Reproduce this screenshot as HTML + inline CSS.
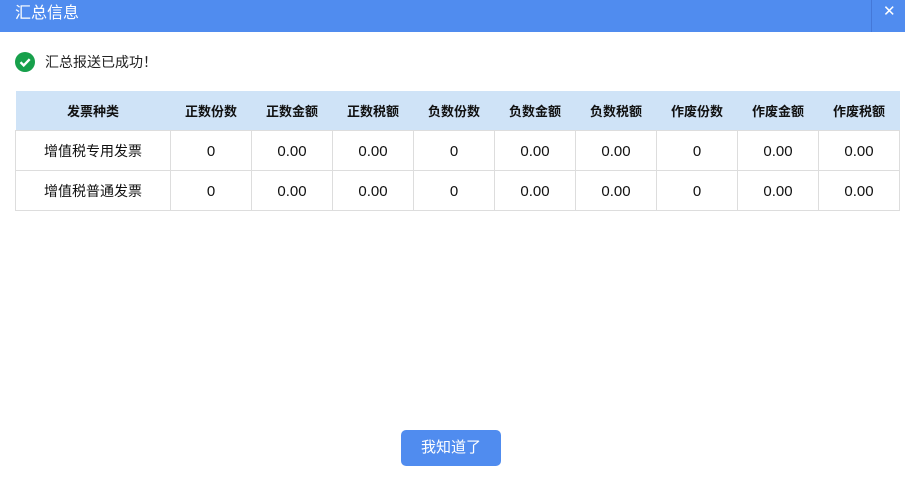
<!DOCTYPE html>
<html><head><meta charset="utf-8"><style>
*{margin:0;padding:0;box-sizing:border-box}
body{width:905px;height:482px;background:#fff;font-family:"Liberation Sans","Noto Sans CJK SC",sans-serif;position:relative;overflow:hidden}
.hd{position:absolute;left:0;top:0;width:905px;height:32px;background:#508cef;color:#fff;font-size:16px;line-height:28px;padding-left:15px}
.sep{position:absolute;left:871px;top:0;width:1px;height:32px;background:#4478d8}
.x{position:absolute;left:883px;top:0;color:#fff;font-size:15px;line-height:24px}
.ok{position:absolute;left:15px;top:52px;width:20px;height:20px;border-radius:50%;background:#17a04b}
.msg{position:absolute;left:45px;top:52px;font-size:14px;line-height:20px;color:#222}
table{position:absolute;left:15px;top:91px;border-collapse:collapse;font-size:14px;color:#111}
th{background:#cfe3f7;height:39px;font-weight:bold;font-size:13px;border:none}
td{height:40px;border:1px solid #ddd;text-align:center;padding-top:2px;font-size:15px}
td:first-child{font-size:14px}
</style></head><body>
<div class="hd">汇总信息</div><div class="sep"></div><div class="x">✕</div>
<div class="ok"><svg width="20" height="20"><path d="M5.5 10.2l3.2 3.2 6-6.2" stroke="#fff" stroke-width="2.4" fill="none"/></svg></div>
<div class="msg">汇总报送已成功！</div>
<table>
<tr><th style="width:155px">发票种类</th><th style="width:81px">正数份数</th><th style="width:81px">正数金额</th><th style="width:81px">正数税额</th><th style="width:81px">负数份数</th><th style="width:81px">负数金额</th><th style="width:81px">负数税额</th><th style="width:81px">作废份数</th><th style="width:81px">作废金额</th><th style="width:81px">作废税额</th></tr>
<tr><td>增值税专用发票</td><td>0</td><td>0.00</td><td>0.00</td><td>0</td><td>0.00</td><td>0.00</td><td>0</td><td>0.00</td><td>0.00</td></tr>
<tr><td>增值税普通发票</td><td>0</td><td>0.00</td><td>0.00</td><td>0</td><td>0.00</td><td>0.00</td><td>0</td><td>0.00</td><td>0.00</td></tr>
</table>
<div style="position:absolute;left:401px;top:430px;width:100px;height:36px;background:#508cef;border-radius:5px;color:#fff;font-size:15px;line-height:36px;text-align:center">我知道了</div>
</body></html>
